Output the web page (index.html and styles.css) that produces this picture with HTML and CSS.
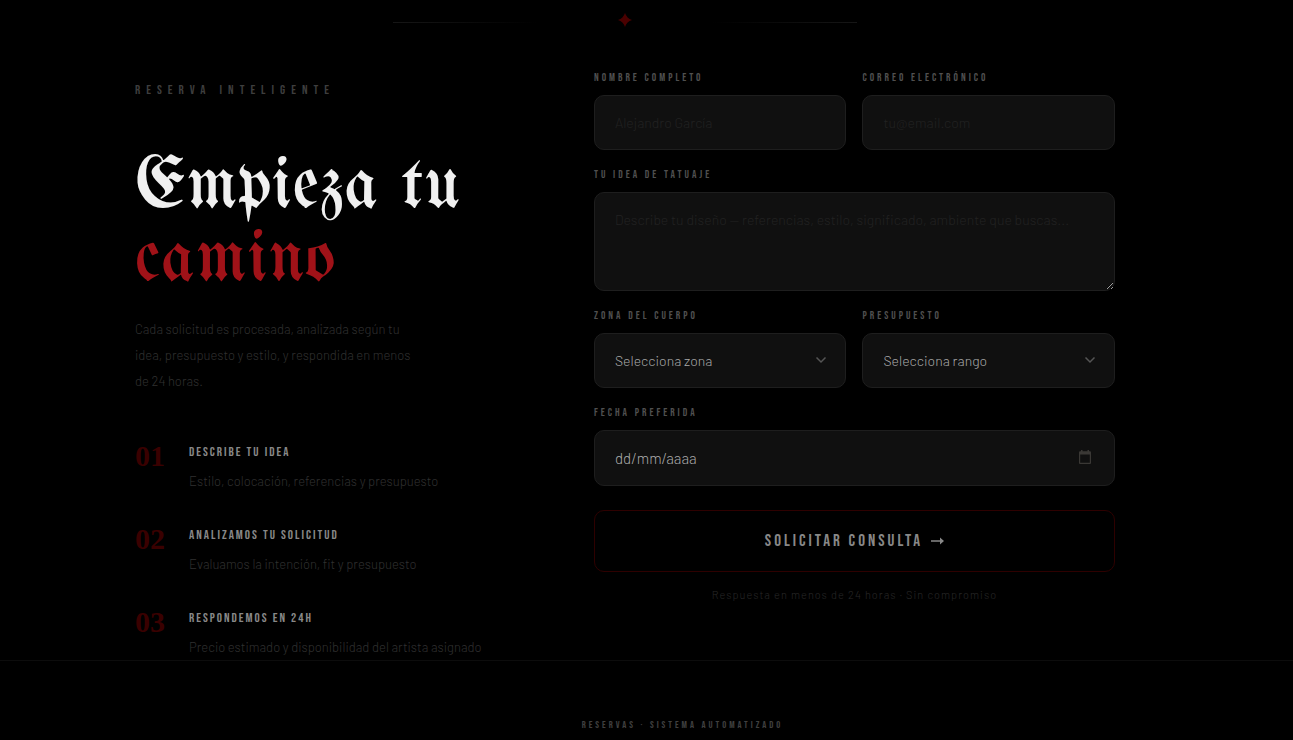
FILE: index.html
```html
<!DOCTYPE html>
<html lang="es">
<head>
  <meta charset="UTF-8">
  <meta name="viewport" content="width=device-width, initial-scale=1.0">
  <title>Reserva inteligente</title>
  <link rel="stylesheet" href="styles.css">
</head>
<body>
  <section class="booking">
    <div class="divider">
      <span class="divider-line"></span>
      <svg class="divider-star" viewBox="0 0 14 14" aria-hidden="true"><path d="M7 0Q8.7 5.3 14 7Q8.7 8.7 7 14Q5.3 8.7 0 7Q5.3 5.3 7 0Z"/></svg>
      <span class="divider-line right"></span>
    </div>

    <div class="booking-grid">
      <div class="intro">
        <p class="eyebrow">RESERVA INTELIGENTE</p>
        <h1>Empieza tu<br><span class="red">camino</span></h1>
        <p class="lead">Cada solicitud es procesada, analizada según tu idea, presupuesto y estilo, y respondida en menos de 24 horas.</p>

        <div class="steps">
          <div class="step">
            <span class="step-num">01</span>
            <div>
              <h3>DESCRIBE TU IDEA</h3>
              <p>Estilo, colocación, referencias y presupuesto</p>
            </div>
          </div>
          <div class="step">
            <span class="step-num">02</span>
            <div>
              <h3>ANALIZAMOS TU SOLICITUD</h3>
              <p>Evaluamos la intención, fit y presupuesto</p>
            </div>
          </div>
          <div class="step">
            <span class="step-num">03</span>
            <div>
              <h3>RESPONDEMOS EN 24H</h3>
              <p>Precio estimado y disponibilidad del artista asignado</p>
            </div>
          </div>
        </div>
      </div>

      <form class="booking-form">
        <div class="row">
          <div class="field">
            <label for="nombre">NOMBRE COMPLETO</label>
            <input type="text" id="nombre" placeholder="Alejandro García">
          </div>
          <div class="field">
            <label for="email">CORREO ELECTRÓNICO</label>
            <input type="email" id="email" placeholder="tu@email.com">
          </div>
        </div>
        <div class="field">
          <label for="idea">TU IDEA DE TATUAJE</label>
          <textarea id="idea" placeholder="Describe tu diseño — referencias, estilo, significado, ambiente que buscas..."></textarea>
        </div>
        <div class="row">
          <div class="field">
            <label for="zona">ZONA DEL CUERPO</label>
            <div class="control">
              <select id="zona"><option>Selecciona zona</option></select>
              <svg class="chevron" viewBox="0 0 12 8" aria-hidden="true"><path d="M1.5 1.5L6 6L10.5 1.5"/></svg>
            </div>
          </div>
          <div class="field">
            <label for="presupuesto">PRESUPUESTO</label>
            <div class="control">
              <select id="presupuesto"><option>Selecciona rango</option></select>
              <svg class="chevron" viewBox="0 0 12 8" aria-hidden="true"><path d="M1.5 1.5L6 6L10.5 1.5"/></svg>
            </div>
          </div>
        </div>
        <div class="field">
          <label for="fecha">FECHA PREFERIDA</label>
          <div class="control">
            <input type="text" id="fecha" class="date" placeholder="dd/mm/aaaa">
            <svg class="calendar" viewBox="0 0 12 14" aria-hidden="true"><path d="M2 0H3.5V1.3H8.5V0H10V1.3H11Q12 1.3 12 2.3V13Q12 14 11 14H1Q0 14 0 13V2.3Q0 1.3 1 1.3H2ZM1.2 4.5V12.8H10.8V4.5Z"/></svg>
          </div>
        </div>
        <button type="submit">SOLICITAR CONSULTA
          <svg class="arrow" viewBox="0 0 13 8" aria-hidden="true"><path d="M0 3.3H9V0.5L13 4L9 7.5V4.7H0Z"/></svg>
        </button>
        <p class="note">Respuesta en menos de 24 horas · Sin compromiso</p>
      </form>
    </div>
  </section>

  <footer>
    <p>RESERVAS · SISTEMA AUTOMATIZADO</p>
  </footer>
</body>
</html>
```
FILE: styles.css
```css
* {
  box-sizing: border-box;
  margin: 0;
  padding: 0;
}

body {
  background: #000;
  color: #aaa;
  font-family: Barlow, Roboto, sans-serif;
  font-weight: 300;
}

.booking {
  max-width: 1250px;
  padding: 12px 135px 2px;
}

.divider {
  display: flex;
  align-items: center;
  justify-content: center;
  gap: 80px;
  height: 20px;
}

.divider-line {
  width: 145px;
  height: 1px;
  background: linear-gradient(to right, #161616, #000);
}

.divider-line.right {
  background: linear-gradient(to left, #161616, #000);
}

.divider-star {
  width: 14px;
  height: 14px;
  margin-bottom: 4px;
  fill: #4a0000;
}

.booking-grid {
  display: grid;
  grid-template-columns: 8fr 11fr;
  gap: 80px;
  padding-top: 38px;
}

.eyebrow,
.field label,
.step h3,
.booking-form button,
footer p {
  font-family: "Bebas Neue", "Roboto Condensed", "DejaVu Sans Condensed", sans-serif;
  font-weight: 400;
}

.intro {
  padding-top: 12px;
}

.eyebrow {
  font-size: 13px;
  line-height: 16px;
  letter-spacing: 6px;
  color: #3e3e3e;
}

h1 {
  margin-top: 54px;
  font-family: UnifrakturMaguntia, UnifrakturCook, "Liberation Serif", serif;
  font-size: 72px;
  font-weight: 400;
  line-height: 73px;
  letter-spacing: 1px;
  white-space: nowrap;
  color: #f0f0f0;
}

.red {
  color: #a01218;
}

.lead {
  max-width: 288px;
  margin-top: 18px;
  font-size: 13px;
  line-height: 26px;
  color: #303030;
}

.steps {
  display: flex;
  flex-direction: column;
  gap: 33px;
  margin-top: 48px;
}

.step {
  display: flex;
  gap: 24px;
}

.step-num {
  width: 30px;
  font-family: "Liberation Serif", serif;
  font-size: 30px;
  font-weight: 700;
  line-height: 28px;
  color: #3a0000;
}

.step h3 {
  font-size: 13px;
  line-height: 20px;
  letter-spacing: 2px;
  color: #888;
}

.step p {
  margin-top: 8px;
  font-size: 13px;
  line-height: 22px;
  white-space: nowrap;
  color: #303030;
}

.booking-form {
  display: flex;
  flex-direction: column;
  gap: 17px;
}

.row {
  display: grid;
  grid-template-columns: 1fr 1fr;
  gap: 16px;
}

.field label {
  display: block;
  margin-bottom: 9px;
  font-size: 11px;
  line-height: 16px;
  letter-spacing: 3px;
  color: #505050;
}

input,
select,
textarea {
  display: block;
  width: 100%;
  height: 55px;
  padding: 16px 20px;
  background: #101010;
  border: 1px solid #1e1e1e;
  border-radius: 10px;
  color: #aaa;
  font-family: Barlow, Roboto, sans-serif;
  font-size: 14px;
  font-weight: 300;
  line-height: 22px;
  appearance: none;
}

textarea {
  height: 99px;
  resize: vertical;
}

::placeholder {
  color: #222;
}

.date {
  height: 56px;
  font-size: 15px;
}

.date::placeholder {
  color: #aaa;
}

.control {
  position: relative;
}

.chevron {
  position: absolute;
  top: 23px;
  right: 19px;
  width: 12px;
  height: 8px;
  fill: none;
  stroke: #555;
  stroke-width: 1.5;
}

.calendar {
  position: absolute;
  top: 20px;
  right: 24px;
  width: 12px;
  height: 14px;
  fill: #3a3835;
  fill-rule: evenodd;
}

.booking-form button {
  display: flex;
  align-items: center;
  justify-content: center;
  gap: 8px;
  height: 62px;
  margin-top: 7px;
  background: transparent;
  border: 1px solid #2e0000;
  border-radius: 10px;
  font-size: 17px;
  letter-spacing: 3px;
  color: #888;
  cursor: pointer;
}

.arrow {
  width: 13px;
  height: 8px;
  fill: #888;
}

.note {
  font-size: 11px;
  line-height: 12px;
  letter-spacing: 1px;
  text-align: center;
  color: #282828;
}

footer {
  padding: 56px 0 8px 72px;
  border-top: 1px solid #0c0c0c;
  text-align: center;
}

footer p {
  font-size: 10px;
  line-height: 16px;
  letter-spacing: 3px;
  color: #404040;
}
```
